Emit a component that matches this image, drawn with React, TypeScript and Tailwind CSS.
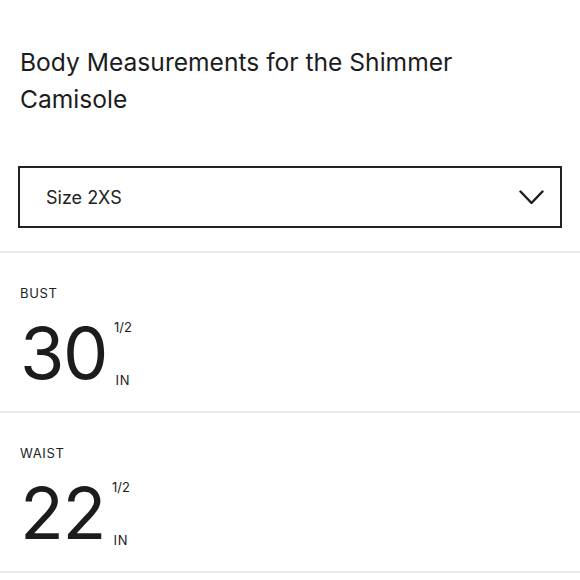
import React from 'react';

interface Measurement {
    label: string;
    whole: string;
    fraction: string;
}

const measurements: Measurement[] = [
    { label: 'Bust', whole: '30', fraction: '1/2' },
    { label: 'Waist', whole: '22', fraction: '1/2' },
];

const Chevron: React.FC = () => (
    <svg width="25" height="15" viewBox="0 0 25 15" fill="none" className="text-[#1c1c1c]">
        <polyline points="1.5,1.5 12.5,13 23.5,1.5" stroke="currentColor" strokeWidth="2.4" strokeLinecap="round" strokeLinejoin="round" />
    </svg>
);

const MeasurementRow: React.FC<{ item: Measurement }> = ({ item }) => (
    <div className="px-5 pt-[32px] pb-[22px] border-b-2 border-[#ebebeb]">
        <div className="text-[13px] leading-4 uppercase tracking-[0.05em] text-[#222]">{item.label}</div>
        <div className="mt-4 flex items-stretch">
            <span className="text-[72px] leading-none tracking-[-0.02em] text-[#1c1c1c]">{item.whole}</span>
            <div className="ml-[7px] flex flex-col items-center justify-between pt-[2px] pb-[1px] text-[13px] leading-4 text-[#222]">
                <span>{item.fraction}</span>
                <span className="tracking-[0.06em]">IN</span>
            </div>
        </div>
    </div>
);

export default function App() {
    return (
        <div className="w-[580px] min-h-[580px] bg-white font-['Inter',sans-serif] text-[#1c1c1c]">
            {/* Heading */}
            <h1 className="px-5 pt-[44px] max-w-[520px] text-[24.6px] leading-[37px] font-normal text-[#1c1c1c]">
                Body Measurements for the Shimmer Camisole
            </h1>

            {/* Size select */}
            <div className="px-[18px] mt-[48px] pb-[23px] border-b-2 border-[#ebebeb]">
                <div className="h-[62px] border-2 border-[#222] flex items-center justify-between pl-[26px] pr-[16px]">
                    <span className="text-[18px] text-[#222]">Size 2XS</span>
                    <Chevron />
                </div>
            </div>

            {measurements.map((m) => (
                <MeasurementRow key={m.label} item={m} />
            ))}
        </div>
    );
}
